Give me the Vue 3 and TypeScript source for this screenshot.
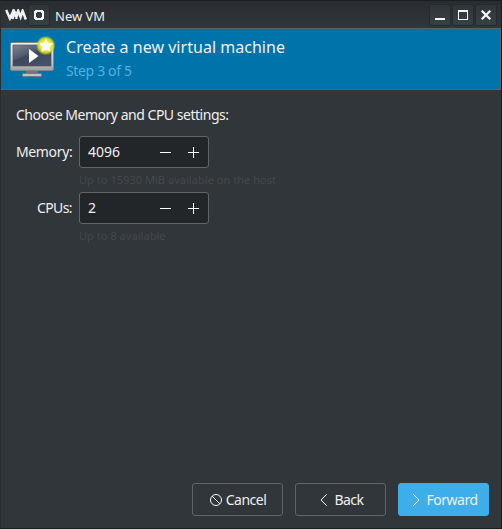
<script setup lang="ts">
import { ref } from 'vue'

interface Field {
  id: string
  label: string
  value: number
  step: number
  max: number
  hint: string
}

const fields = ref<Field[]>([
  { id: 'memory', label: 'Memory:', value: 4096, step: 1, max: 15930, hint: 'Up to 15930 MiB available on the host' },
  { id: 'cpus', label: 'CPUs:', value: 2, step: 1, max: 8, hint: 'Up to 8 available' },
])

function change(field: Field, delta: number): void {
  field.value = Math.min(field.max, Math.max(1, field.value + delta * field.step))
}
</script>

<template>
  <div class="window">
    <header class="titlebar">
      <svg class="logo" width="22" height="12" viewBox="0 0 22 12">
        <path d="M1.2 1L4.9 9.4L8.6 1.2L12 9.5M7.2 10L10.6 2.2M11 9.8L13.2 1.8L15.6 8L17.6 1.8L20.8 10.5" fill="none" stroke="#f0f1f1" stroke-width="2.5" />
      </svg>
      <button class="tool pin" aria-label="Pin">
        <svg width="20" height="20" viewBox="0 0 20 20">
          <path d="M6 5h8v1h1v8h-1v1H6v-1H5V6h1zM8 7v1H7v4h1v1h4v-1h1V8h-1V7z" fill="#f4f5f5" fill-rule="evenodd" />
        </svg>
      </button>
      <span class="caption">New VM</span>
      <div class="controls">
        <button class="tool" aria-label="Minimize">
          <svg width="20" height="20" viewBox="0 0 20 20"><path d="M5 13h10v2H5z" fill="#f4f5f5" /></svg>
        </button>
        <button class="tool" aria-label="Maximize">
          <svg width="20" height="20" viewBox="0 0 20 20"><path d="M5 5h10v10H5zM6 7v7h8V7z" fill="#f4f5f5" fill-rule="evenodd" /></svg>
        </button>
        <button class="tool" aria-label="Close">
          <svg width="20" height="20" viewBox="0 0 20 20"><path d="M5.7 5.7l8.6 8.6M14.3 5.7l-8.6 8.6" stroke="#f4f5f5" stroke-width="2.3" /></svg>
        </button>
      </div>
    </header>

    <section class="banner">
      <svg class="monitor" width="50" height="46" viewBox="6 34 50 46">
        <defs>
          <linearGradient id="frame" x1="0" y1="0" x2="0" y2="1">
            <stop offset="0" stop-color="#f0f0ef" />
            <stop offset="0.75" stop-color="#c7c7c6" />
            <stop offset="1" stop-color="#9b9d9c" />
          </linearGradient>
          <linearGradient id="screen" x1="0" y1="0" x2="0.7" y2="1">
            <stop offset="0" stop-color="#7d8797" />
            <stop offset="0.48" stop-color="#4d586b" />
            <stop offset="0.52" stop-color="#3d485d" />
            <stop offset="1" stop-color="#465167" />
          </linearGradient>
          <radialGradient id="glow">
            <stop offset="0.5" stop-color="#f1ef35" />
            <stop offset="0.75" stop-color="#dde323" stop-opacity="0.85" />
            <stop offset="1" stop-color="#b3d431" stop-opacity="0" />
          </radialGradient>
        </defs>
        <path d="M26 71h12v4H26z" fill="#727574" />
        <rect x="22.5" y="73.5" width="19" height="3" rx="0.5" fill="#bfc0bf" stroke="#777b7b" />
        <rect x="10.5" y="42.5" width="43" height="28" rx="1.5" fill="url(#frame)" stroke="#858888" />
        <rect x="13" y="45" width="38" height="21" fill="url(#screen)" stroke="#4b5361" stroke-width="0.7" />
        <path d="M29 49L38.5 56L29 63z" fill="#fff" />
        <circle cx="45.7" cy="45.5" r="9.9" fill="url(#glow)" />
        <path d="M46 38.5l2.2 4.4 4.8.7-3.5 3.4.8 4.8-4.3-2.2-4.3 2.2.8-4.8-3.5-3.4 4.8-.7z" fill="#fff" />
      </svg>
      <div class="heading">
        <h1>Create a new virtual machine</h1>
        <p>Step 3 of 5</p>
      </div>
    </section>

    <main class="content">
      <p class="intro">Choose Memory and CPU settings:</p>
      <div class="form">
        <template v-for="field in fields" :key="field.id">
          <span class="label" :class="field.id">{{ field.label }}</span>
          <div class="spin">
            <span class="value">{{ field.value }}</span>
            <button aria-label="Decrease" @click="change(field, -1)">
              <svg width="28" height="30" viewBox="0 0 28 30"><path d="M9 15h11v1H9z" fill="#fcfcfc" /></svg>
            </button>
            <button aria-label="Increase" @click="change(field, 1)">
              <svg width="28" height="30" viewBox="0 0 28 30"><path d="M9 15h11v1H9zM14 10h1v11h-1z" fill="#fcfcfc" /></svg>
            </button>
          </div>
          <span class="hint">{{ field.hint }}</span>
        </template>
      </div>
    </main>

    <footer class="actions">
      <button class="action cancel">
        <svg width="14" height="14" viewBox="0 0 14 14" fill="none" stroke="#fcfcfc"><circle cx="7" cy="7" r="5.5" /><path d="M3.1 3.1l7.8 7.8" /></svg>
        <span>Cancel</span>
      </button>
      <button class="action back">
        <svg width="14" height="14" viewBox="0 0 14 14" fill="none" stroke="#fcfcfc"><path d="M9.7 1.3L4 7l5.7 5.7" /></svg>
        <span>Back</span>
      </button>
      <button class="action forward">
        <svg width="14" height="14" viewBox="0 0 14 14" fill="none" stroke="#fcfcfc"><path d="M4.3 1.3L10 7l-5.7 5.7" /></svg>
        <span>Forward</span>
      </button>
    </footer>
  </div>
</template>

<style>
body {
  background: #191c1f;
}
</style>

<style scoped>
.window {
  box-sizing: border-box;
  width: 502px;
  height: 529px;
  display: flex;
  flex-direction: column;
  border: 1px solid #1b1e21;
  border-left-color: #292d31;
  background: #31363b;
  color: #eff0f1;
  font-family: 'Noto Sans', sans-serif;
  font-size: 14px;
  letter-spacing: -0.48px;
  line-height: 18px;
}
button {
  margin: 0;
  padding: 0;
  border: 0;
  background: none;
  color: inherit;
  font: inherit;
  letter-spacing: inherit;
}
svg {
  display: block;
  flex: none;
}
h1,
p {
  margin: 0;
}
.titlebar {
  box-sizing: border-box;
  flex: none;
  display: flex;
  align-items: center;
  height: 27px;
  padding: 0 5px 0 4px;
  background: linear-gradient(#292d31, #31363b);
}
.tool {
  width: 20px;
  height: 20px;
  border-radius: 2px;
  background: linear-gradient(#31363b, #3a3f45);
  box-shadow: 0 0 0 1px #262a2e;
}
.pin {
  margin-left: 2px;
}
.caption {
  margin: 3px 0 0 6px;
  font-size: 13px;
  letter-spacing: 0;
}
.controls {
  display: flex;
  gap: 3px;
  margin-left: auto;
}
.banner {
  box-sizing: border-box;
  flex: none;
  display: flex;
  height: 62px;
  border: 1px solid #5c6165;
  border-left: 0;
  background: #0073aa;
}
.monitor {
  margin: 5px 0 0 5px;
}
.heading {
  padding: 7px 0 0 10px;
}
h1 {
  font-size: 16px;
  font-weight: 400;
  letter-spacing: 0.03px;
  line-height: 23px;
}
.heading p {
  margin-top: 3px;
  color: #55b0e0;
  letter-spacing: -0.35px;
  line-height: 18px;
}
.content {
  flex: 1;
  padding: 16px 15px 0;
}
.form {
  display: grid;
  grid-template-columns: 56px 130px;
  grid-template-rows: 32px 24px 32px 24px;
  column-gap: 7px;
  margin-top: 12px;
}
.label {
  align-self: center;
  text-align: right;
  white-space: nowrap;
}
.label.memory {
  letter-spacing: -0.36px;
}
.label.cpus {
  letter-spacing: -0.6px;
}
.spin {
  box-sizing: border-box;
  display: flex;
  padding-right: 1px;
  border: 1px solid #616569;
  border-radius: 3px;
  background: #232629;
}
.value {
  flex: 1;
  padding-left: 8px;
  letter-spacing: 0;
  line-height: 30px;
}
.hint {
  grid-column: 2;
  color: #45484a;
  font-size: 11px;
  letter-spacing: 0.04px;
  line-height: 24px;
  white-space: nowrap;
}
.actions {
  display: flex;
  justify-content: flex-end;
  gap: 12px;
  padding: 0 12px 12px 0;
}
.action {
  box-sizing: border-box;
  display: flex;
  align-items: center;
  justify-content: center;
  gap: 3px;
  width: 91px;
  height: 33px;
  border: 1px solid #616569;
  border-radius: 3px;
}
.forward {
  border-color: #3daee9;
  background: #3daee9;
}
</style>
